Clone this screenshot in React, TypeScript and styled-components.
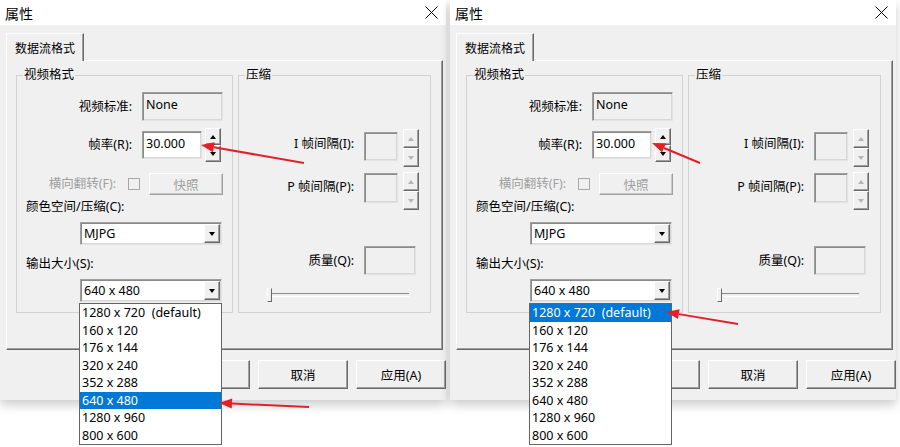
import React from 'react';
import styled, { createGlobalStyle } from 'styled-components';

const GlobalStyle = createGlobalStyle`
  html, body {
    margin: 0;
    padding: 0;
    background: #fff;
  }
  body {
    font-family: "Noto Sans", "Noto Sans CJK SC", sans-serif;
    font-size: 12.5px;
    color: #000;
  }
`;

const SIZES = [
  '1280 x 720  (default)',
  '160 x 120',
  '176 x 144',
  '320 x 240',
  '352 x 288',
  '640 x 480',
  '1280 x 960',
  '800 x 600',
];

const Page = styled.div`
  display: flex;
  width: 900px;
  height: 447px;
  overflow: hidden;
  background: #fff;
`;

const Column = styled.div`
  position: relative;
  width: 450px;
  flex: none;
`;

const Dialog = styled.div`
  width: 446px;
  display: flex;
  flex-direction: column;
  box-shadow: 0 5px 10px rgba(0, 0, 0, 0.2);
`;

const TitleBar = styled.div`
  height: 25px;
  background: #fff;
  display: flex;
  align-items: center;
  justify-content: space-between;
  padding: 0 8px 0 5px;
  font-size: 14px;
`;

const Body = styled.div`
  background: #f0f0f0;
  height: 375px;
  box-sizing: border-box;
  padding: 8px 0 0 6px;
  display: flex;
  flex-direction: column;
`;

const TabStrip = styled.div`
  display: flex;
`;

const Tab = styled.div`
  position: relative;
  z-index: 1;
  height: 28px;
  margin-bottom: -1px;
  box-sizing: border-box;
  padding: 0 8px;
  display: flex;
  align-items: center;
  font-size: 12px;
  background: #f0f0f0;
  border-top: 1px solid #fff;
  border-left: 1px solid #fff;
  border-right: 1px solid #696969;
  box-shadow: inset -1px 0 #a0a0a0;
`;

const TabPanel = styled.div`
  width: 437px;
  height: 290px;
  box-sizing: border-box;
  padding: 5px 0 0 9px;
  border-top: 1px solid #fff;
  border-left: 1px solid #fff;
  border-right: 1px solid #696969;
  border-bottom: 1px solid #696969;
  box-shadow: inset -1px -1px #a0a0a0;
  display: flex;
  gap: 5px;
`;

const Group = styled.fieldset<{ $w: number }>`
  width: ${(p) => p.$w}px;
  height: 247px;
  box-sizing: border-box;
  margin: 0;
  padding: 0;
  min-width: 0;
  border: 1px solid #d2d2d2;
  display: flex;
  flex-direction: column;
`;

const Legend = styled.legend`
  margin-left: 6px;
  padding: 0 1px;
  line-height: 18px;
`;

const Row = styled.div<{ $mt: number; $h: number; $top?: boolean }>`
  display: flex;
  align-items: ${(p) => (p.$top ? 'flex-start' : 'center')};
  margin-top: ${(p) => p.$mt}px;
  height: ${(p) => p.$h}px;
`;

const Label = styled.span<{ $w: number; $disabled?: boolean; $mt?: number }>`
  width: ${(p) => p.$w}px;
  flex: none;
  text-align: right;
  line-height: 18px;
  white-space: nowrap;
  margin-top: ${(p) => p.$mt ?? 0}px;
  color: ${(p) => (p.$disabled ? '#a0a0a0' : '#000')};
`;

const Caption = styled.div<{ $mt: number }>`
  margin-top: ${(p) => p.$mt}px;
  padding-left: 9px;
  line-height: 18px;
  white-space: nowrap;
`;

const Field = styled.div<{ $w: number; $h: number; $ml: number; $mt?: number; $white?: boolean }>`
  width: ${(p) => p.$w}px;
  height: ${(p) => p.$h}px;
  margin-left: ${(p) => p.$ml}px;
  margin-top: ${(p) => p.$mt ?? 0}px;
  flex: none;
  box-sizing: border-box;
  padding: 3px 0 0 3px;
  line-height: 18px;
  background: ${(p) => (p.$white ? '#fff' : '#f0f0f0')};
  border: 1px solid;
  border-color: #a0a0a0 #e3e3e3 #e3e3e3 #a0a0a0;
  box-shadow: inset 1px 1px #8a8a8a, inset -1px -1px #d8d8d8;
`;

const Spinner = styled.div<{ $h: number; $ml: number }>`
  width: 16px;
  height: ${(p) => p.$h}px;
  margin-left: ${(p) => p.$ml}px;
  flex: none;
  display: flex;
  flex-direction: column;
`;

const SpinButton = styled.div`
  flex: 1;
  box-sizing: border-box;
  display: flex;
  align-items: center;
  justify-content: center;
  background: #f0f0f0;
  border: 1px solid;
  border-color: #fff #696969 #696969 #fff;
  box-shadow: inset -1px -1px #a0a0a0;
`;

const Tri = styled.span<{ $down?: boolean; $disabled?: boolean }>`
  width: 0;
  height: 0;
  border-left: 3.5px solid transparent;
  border-right: 3.5px solid transparent;
  ${(p) => (p.$down ? 'border-top' : 'border-bottom')}: 4px solid
    ${(p) => (p.$disabled ? '#b4b4b4' : '#000')};
`;

const CheckBox = styled.span`
  width: 12px;
  height: 12px;
  margin-left: 12px;
  flex: none;
  box-sizing: border-box;
  border: 1px solid #a8a8a8;
  background: #f0f0f0;
`;

const SmallButton = styled.div`
  width: 74px;
  height: 22px;
  margin-left: 9px;
  box-sizing: border-box;
  display: flex;
  align-items: center;
  justify-content: center;
  color: #a0a0a0;
  border: 1px solid;
  border-color: #fff #a0a0a0 #a0a0a0 #fff;
  box-shadow: inset -1px -1px #c8c8c8;
`;

const Combo = styled.div<{ $mt: number }>`
  position: relative;
  width: 142px;
  height: 23px;
  margin: ${(p) => p.$mt}px 0 0 63px;
  box-sizing: border-box;
  background: #fff;
  display: flex;
  align-items: center;
  border: 1px solid;
  border-color: #a0a0a0 #e3e3e3 #e3e3e3 #a0a0a0;
  box-shadow: inset 1px 1px #8a8a8a, inset -1px -1px #d8d8d8;
`;

const ComboText = styled.span`
  flex: 1;
  padding-left: 3px;
  line-height: 18px;
  white-space: pre;
`;

const ComboButton = styled.div`
  width: 16px;
  height: 19px;
  margin-right: 1px;
  box-sizing: border-box;
  display: flex;
  align-items: center;
  justify-content: center;
  background: #f0f0f0;
  border: 1px solid;
  border-color: #fff #696969 #696969 #fff;
  box-shadow: inset -1px -1px #a0a0a0;
`;

const DropList = styled.div`
  position: absolute;
  z-index: 5;
  top: calc(100% + 2px);
  left: -2px;
  width: 143px;
  box-sizing: border-box;
  background: #fff;
  border: 1px solid #646464;
`;

const DropItem = styled.div<{ $sel: boolean }>`
  height: 17.5px;
  line-height: 17.5px;
  padding-left: 2px;
  white-space: pre;
  background: ${(p) => (p.$sel ? '#0078d7' : '#fff')};
  color: ${(p) => (p.$sel ? '#fff' : '#000')};
`;

const Slider = styled.div`
  display: flex;
  align-items: flex-start;
  width: 142px;
  height: 14px;
  margin: 13px 0 0 28px;
`;

const Thumb = styled.span`
  width: 5px;
  height: 14px;
  flex: none;
  box-sizing: border-box;
  border: 1px solid;
  border-color: #fff #696969 #696969 #fff;
  background: #f0f0f0;
`;

const Track = styled.span`
  flex: 1;
  height: 2px;
  margin-top: 5px;
  border-top: 1px solid #8a8a8a;
  border-bottom: 1px solid #fff;
`;

const ButtonRow = styled.div`
  display: flex;
  justify-content: flex-end;
  gap: 8px;
  margin-top: 10px;
`;

const Button = styled.div`
  width: 90px;
  height: 29px;
  box-sizing: border-box;
  display: flex;
  align-items: center;
  justify-content: center;
  background: #f0f0f0;
  border: 1px solid;
  border-color: #fff #696969 #696969 #fff;
  box-shadow: inset -1px -1px #a0a0a0;
`;

const Overlay = styled.svg`
  position: absolute;
  z-index: 10;
  left: 0;
  top: 0;
  pointer-events: none;
`;

type ArrowSpec = { x1: number; y1: number; x2: number; y2: number };

const Arrow: React.FC<ArrowSpec> = ({ x1, y1, x2, y2 }) => {
  const a = Math.atan2(y2 - y1, x2 - x1);
  const len = 13;
  const w = 5;
  const bx = x2 - len * Math.cos(a);
  const by = y2 - len * Math.sin(a);
  const pts = [
    [x2, y2],
    [bx + w * Math.sin(a), by - w * Math.cos(a)],
    [bx - w * Math.sin(a), by + w * Math.cos(a)],
  ]
    .map((p) => p.join(','))
    .join(' ');
  return (
    <g>
      <line x1={x1} y1={y1} x2={bx} y2={by} stroke="#e3202a" strokeWidth={2} />
      <polygon points={pts} fill="#e3202a" />
    </g>
  );
};

const CloseIcon = () => (
  <svg width="13" height="13" viewBox="0 0 13 13">
    <path d="M0.5 0.5 L12.5 12.5 M12.5 0.5 L0.5 12.5" stroke="#000" strokeWidth="1" />
  </svg>
);

const Spin: React.FC<{ h: number; ml: number; disabled?: boolean }> = ({ h, ml, disabled }) => (
  <Spinner $h={h} $ml={ml}>
    <SpinButton>
      <Tri $disabled={disabled} />
    </SpinButton>
    <SpinButton>
      <Tri $down $disabled={disabled} />
    </SpinButton>
  </Spinner>
);

const PropertyDialog: React.FC<{ selected: number; arrows: ArrowSpec[] }> = ({ selected, arrows }) => (
  <Column>
    <Dialog>
      <TitleBar>
        <span>属性</span>
        <CloseIcon />
      </TitleBar>
      <Body>
        <TabStrip>
          <Tab>数据流格式</Tab>
        </TabStrip>
        <TabPanel>
          <Group $w={217}>
            <Legend>视频格式</Legend>
            <Row $mt={8} $h={29}>
              <Label $w={115}>视频标准:</Label>
              <Field $w={81} $h={29} $ml={10}>
                None
              </Field>
            </Row>
            <Row $mt={7} $h={34}>
              <Label $w={115}>帧率(R):</Label>
              <Field $w={60} $h={28} $ml={10} $white>
                30.000
              </Field>
              <Spin h={34} ml={3} />
            </Row>
            <Row $mt={11} $h={22}>
              <Label $w={99} $disabled>
                横向翻转(F):
              </Label>
              <CheckBox />
              <SmallButton>快照</SmallButton>
            </Row>
            <Caption $mt={3}>颜色空间/压缩(C):</Caption>
            <Combo $mt={6}>
              <ComboText>MJPG</ComboText>
              <ComboButton>
                <Tri $down />
              </ComboButton>
            </Combo>
            <Caption $mt={10}>输出大小(S):</Caption>
            <Combo $mt={6}>
              <ComboText>640 x 480</ComboText>
              <ComboButton>
                <Tri $down />
              </ComboButton>
              <DropList>
                {SIZES.map((s, i) => (
                  <DropItem key={s} $sel={i === selected}>
                    {s}
                  </DropItem>
                ))}
              </DropList>
            </Combo>
          </Group>
          <Group $w={193}>
            <Legend>压缩</Legend>
            <Row $mt={45} $h={38} $top>
              <Label $w={115} $mt={6}>
                I 帧间隔(I):
              </Label>
              <Field $w={34} $h={29} $ml={10} $mt={3} />
              <Spin h={38} ml={5} disabled />
            </Row>
            <Row $mt={5} $h={38} $top>
              <Label $w={115} $mt={6}>
                P 帧间隔(P):
              </Label>
              <Field $w={34} $h={30} $ml={10} $mt={1} />
              <Spin h={38} ml={5} disabled />
            </Row>
            <Row $mt={36} $h={29}>
              <Label $w={115}>质量(Q):</Label>
              <Field $w={52} $h={29} $ml={10} />
            </Row>
            <Slider>
              <Thumb />
              <Track />
            </Slider>
          </Group>
        </TabPanel>
        <ButtonRow>
          <Button>确定</Button>
          <Button>取消</Button>
          <Button>应用(A)</Button>
        </ButtonRow>
      </Body>
    </Dialog>
    <Overlay width={450} height={447}>
      {arrows.map((a, i) => (
        <Arrow key={i} {...a} />
      ))}
    </Overlay>
  </Column>
);

export default function App() {
  return (
    <>
      <GlobalStyle />
      <Page>
        <PropertyDialog
          selected={5}
          arrows={[
            { x1: 304, y1: 163, x2: 201, y2: 145 },
            { x1: 309, y1: 407, x2: 219, y2: 403 },
          ]}
        />
        <PropertyDialog
          selected={0}
          arrows={[
            { x1: 250, y1: 163, x2: 202, y2: 143 },
            { x1: 288, y1: 324, x2: 216, y2: 312 },
          ]}
        />
      </Page>
    </>
  );
}
